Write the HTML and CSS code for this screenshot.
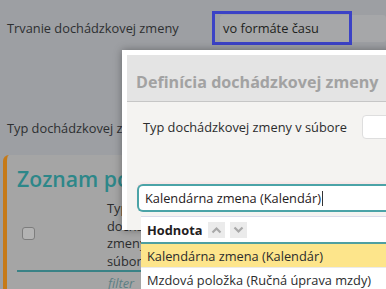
FILE: index.html
```html
<!DOCTYPE html>
<html lang="sk">
<head>
<meta charset="utf-8">
<title>Definícia dochádzkovej zmeny</title>
<link rel="stylesheet" href="styles.css">
</head>
<body>
<div class="page">
  <div class="form-row row-1">
    <label class="lbl">Trvanie dochádzkovej zmeny</label>
    <div class="field">
      <span class="value">vo formáte času</span>
      <span class="highlight"></span>
    </div>
  </div>
  <div class="form-row row-2">
    <label class="lbl">Typ dochádzkovej zmeny v súbore</label>
  </div>
  <section class="card">
    <h2 class="card-title">Zoznam položiek</h2>
    <div class="thead">
      <div class="cb-cell"><span class="cb"></span></div>
      <div class="th">Typ dochádzkovej zmeny v súbore</div>
    </div>
    <div class="filter-row"><span class="filter">filter</span></div>
  </section>
</div>

<div class="modal">
  <div class="modal-head"><h1 class="modal-title">Definícia dochádzkovej zmeny</h1></div>
  <div class="modal-body">
    <div class="m-row">
      <label class="m-lbl">Typ dochádzkovej zmeny v súbore</label>
      <span class="m-input"></span>
    </div>
    <div class="combo">Kalendárna zmena (Kalendár)<span class="caret"></span></div>
  </div>
</div>

<div class="dropdown">
  <div class="dd-head">
    <span class="dd-title">Hodnota</span>
    <span class="sort"><svg width="11" height="8" viewBox="0 0 11 8"><path d="M1.5 6.5 L5.5 2.5 L9.5 6.5" fill="none" stroke="#a8a8a8" stroke-width="2.2"/></svg></span>
    <span class="sort"><svg width="11" height="8" viewBox="0 0 11 8"><path d="M1.5 1.5 L5.5 5.5 L9.5 1.5" fill="none" stroke="#a8a8a8" stroke-width="2.2"/></svg></span>
  </div>
  <div class="dd-item active">Kalendárna zmena (Kalendár)</div>
  <div class="dd-item">Mzdová položka (Ručná úprava mzdy)</div>
</div>
</body>
</html>
```
FILE: styles.css
```css
html, body {
  margin: 0;
  padding: 0;
}
body {
  width: 386px;
  height: 289px;
  overflow: hidden;
  position: relative;
  background: #9d9fa3;
  font-family: "Open Sans", "DejaVu Sans", sans-serif;
  font-size: 12.8px;
  color: #2f3133;
}
.page {
  display: flex;
  flex-direction: column;
}
.form-row {
  display: flex;
  align-items: center;
  padding-left: 7px;
  white-space: nowrap;
}
.row-1 {
  margin-top: 10px;
  height: 36px;
}
.row-2 {
  margin-top: 70px;
  height: 24px;
}
.lbl {
  color: #2d2f31;
}
.row-1 .lbl {
  width: 213px;
  flex: none;
}
.field {
  position: relative;
  width: 300px;
  height: 27px;
  background: #a6a7a9;
  border-radius: 3px;
  display: flex;
  align-items: center;
  padding-left: 3px;
  box-sizing: border-box;
  color: #1e1f20;
}
.highlight {
  position: absolute;
  left: -8px;
  top: -4px;
  width: 134px;
  height: 28px;
  border: 3px solid #3b42c6;
}
.card {
  margin: 15px 0 0 3px;
  border-left: 4px solid #c67a18;
  border-radius: 6px 0 0 0;
  background: #a5a5a5;
  padding: 8px 0 0 10px;
  height: 200px;
}
.card-title {
  margin: 0;
  font-size: 21.2px;
  font-weight: 600;
  line-height: 30px;
  color: #2d8789;
  white-space: nowrap;
  padding-top: 1px;
  height: 29px;
}
.thead {
  display: flex;
  align-items: center;
  border-bottom: 2px solid #3a8286;
  padding: 7px 0 0 0;
}
.cb-cell {
  width: 90px;
  flex: none;
  padding-left: 5px;
  box-sizing: border-box;
  padding-bottom: 4px;
}
.cb {
  display: block;
  width: 11px;
  height: 11px;
  border: 1px solid #7d7d7d;
  border-radius: 3px;
  background: #b3b3b3;
}
.th {
  width: 84px;
  flex: none;
  line-height: 17.5px;
  color: #2b2c2d;
}
.filter-row {
  padding: 2px 0 0 91px;
  line-height: 18px;
}
.filter {
  font-style: italic;
  color: #5d7f84;
}
.modal {
  position: absolute;
  left: 122px;
  top: 50px;
  width: 300px;
  height: 180px;
  background: #ffffff;
  box-shadow: 0 0 8px rgba(0, 0, 0, 0.35);
  padding: 5px 0 0 5px;
  box-sizing: border-box;
  display: flex;
  flex-direction: column;
}
.modal-head {
  height: 47px;
  background: #e4e4e4;
  border-bottom: 1px solid #c6c6c6;
  display: flex;
  align-items: center;
  padding: 7px 0 0 9px;
  box-sizing: border-box;
}
.modal-title {
  margin: 0;
  font-size: 16.1px;
  font-weight: 700;
  color: #a2a2a2;
  white-space: nowrap;
}
.modal-body {
  flex: 1;
  background: #f4f3f1;
  padding-top: 13px;
}
.m-row {
  display: flex;
  align-items: center;
  height: 24px;
  padding-left: 16px;
  white-space: nowrap;
}
.m-lbl {
  color: #2b2c2d;
}
.m-input {
  margin-left: 15px;
  width: 100px;
  height: 22px;
  background: #ffffff;
  border: 1px solid #dedede;
  border-radius: 4px;
}
.combo {
  margin: 45px 0 0 10px;
  height: 28px;
  border: 2px solid #4ba3a7;
  border-right: none;
  border-radius: 6px 0 0 6px;
  box-sizing: border-box;
  background: #ffffff;
  display: flex;
  align-items: center;
  padding-left: 6px;
  color: #1f2021;
  white-space: nowrap;
  box-shadow: 0 -2px 2px #f7e6e6;
}
.caret {
  width: 1px;
  height: 15px;
  background: #333;
  margin-left: 1px;
}
.dropdown {
  position: absolute;
  left: 141px;
  top: 216px;
  width: 260px;
  background: #ffffff;
  border-top: 1px solid #dcdceb;
  white-space: nowrap;
}
.dd-head {
  height: 25px;
  display: flex;
  align-items: center;
  padding-left: 6px;
  border-bottom: 2px solid #4f9fa1;
}
.dd-title {
  font-weight: 700;
  color: #1f2021;
  margin-right: 6px;
}
.sort {
  width: 17px;
  height: 16px;
  background: #ebebeb;
  display: flex;
  align-items: center;
  justify-content: center;
  margin-right: 5px;
}
.dd-item {
  height: 23px;
  display: flex;
  align-items: center;
  padding-left: 6px;
  color: #2b2c2d;
  border-bottom: 1px solid #ebebeb;
}
.dd-item.active {
  background: #fde58b;
}
```
